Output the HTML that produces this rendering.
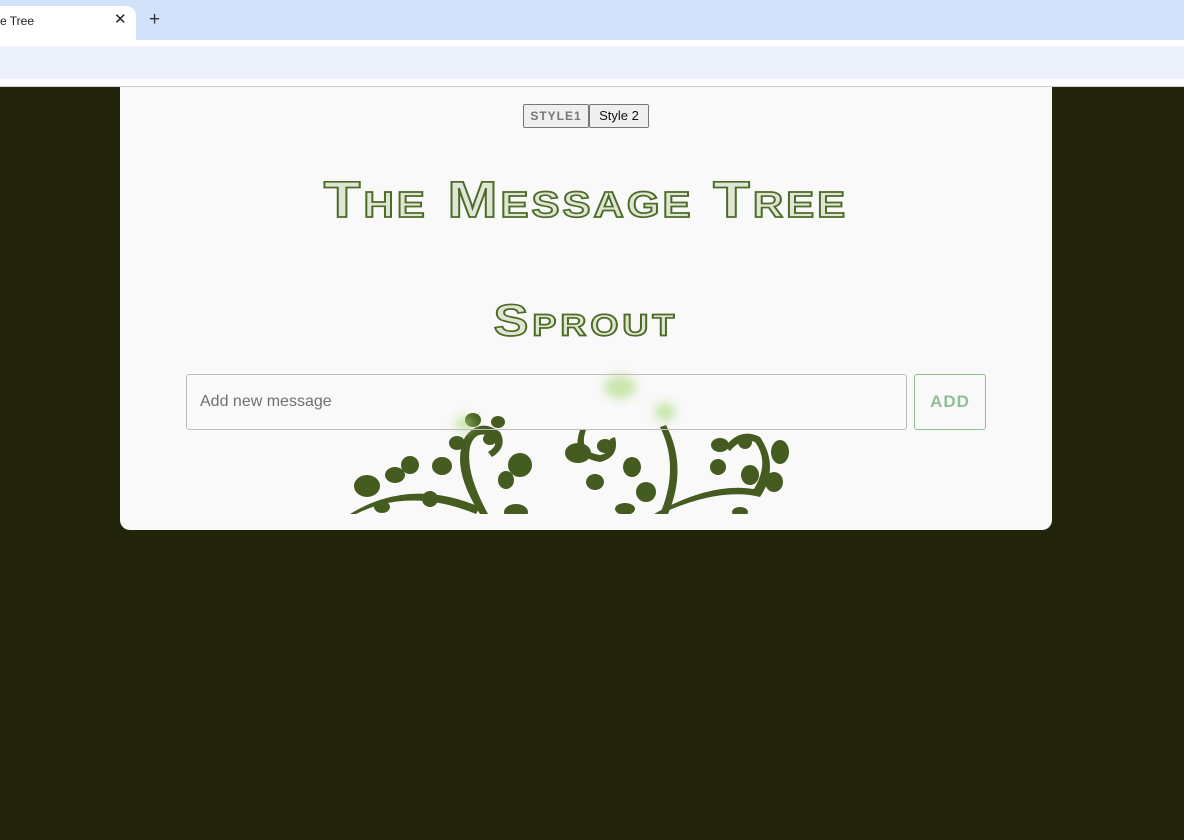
<!DOCTYPE html>
<html><head><style>
body{margin:0;width:1184px;height:840px;background:#22240c;font-family:"Liberation Sans",sans-serif;overflow:hidden;position:relative}
.tabbar{position:absolute;left:0;top:0;width:1184px;height:40px;background:#d3e2fb}
.tab{position:absolute;left:0;top:6px;width:136px;height:34px;background:#fff;border-radius:0 10px 0 0;font-size:12px;color:#222}
.tab span{position:absolute;left:0;top:8px}
.tab b{position:absolute;left:114px;top:4px;font-size:15px;font-weight:normal}
.plus{position:absolute;left:149px;top:9px;font-size:19px;color:#333}
.addr{position:absolute;left:0;top:40px;width:1184px;height:46px;background:#fff}
.addr div{position:absolute;left:0;top:6px;width:1184px;height:33px;background:#ecf1fb}
.line{position:absolute;left:0;top:86px;width:1184px;height:1px;background:#d0d0d0}
.card{position:absolute;left:120px;top:87px;width:932px;height:443px;background:#f9f9f9;border-radius:0 0 10px 10px;overflow:hidden}
.btn{position:absolute;top:17px;height:24px;border:1px solid #767676;background:#efefef;font-size:12px;box-sizing:border-box;line-height:22px;text-align:center;border-radius:2px}
.t{position:absolute;left:0;width:932px;text-align:center;font-weight:bold;font-variant:small-caps;-webkit-text-stroke:2px #4c6b25;color:#dfe6d6}
input{position:absolute;left:66px;top:287px;width:721px;height:56px;box-sizing:border-box;border:1px solid #bdbdbd;border-radius:3px;background:transparent;font-size:16px;padding-left:13px;font-family:"Liberation Sans",sans-serif;color:#333}
input::placeholder{color:#707070}
.add{position:absolute;left:794px;top:287px;width:72px;height:56px;box-sizing:border-box;border:1px solid #8fbf98;border-radius:3px;color:#8fbf98;font-weight:bold;font-size:17px;text-align:center;line-height:54px;letter-spacing:1px}
</style></head><body>
<div class="tabbar"><div class="tab"><span>e Tree</span><b>✕</b></div><div class="plus">+</div></div>
<div class="addr"><div></div></div>
<div class="line"></div>
<div class="card">
<div class="btn" style="left:403px;width:66px;color:#777;font-weight:bold;letter-spacing:1px">STYLE1</div>
<div class="btn" style="left:469px;width:60px;color:#111;font-size:13px">Style 2</div>
<div class="t" style="top:80px;font-size:60px;letter-spacing:3px;line-height:66px;transform:scaleY(0.85)">The Message Tree</div>
<div class="t" style="top:206px;font-size:52px;letter-spacing:4px;line-height:56px;transform:scaleY(0.85)">Sprout</div>
<svg style="position:absolute;left:0;top:0" width="932" height="427">
<g fill="#445c20" stroke="none">
<path d="M230 427 Q290 390 360 420 L356 427 Q290 400 236 427Z"/>
<path d="M360 427 Q330 380 345 350 Q360 330 380 345 Q388 360 372 370 L368 365 Q380 358 372 350 Q355 342 350 360 Q345 385 368 427Z"/>
<path d="M540 427 Q560 380 540 340 L546 338 Q568 380 548 427Z"/>
<path d="M540 427 Q600 400 640 410 Q660 380 640 350 Q620 340 605 360 L610 364 Q622 350 635 355 Q650 375 634 402 Q590 395 534 427Z"/>
<path d="M460 343 Q450 370 480 375 Q500 370 495 350 L490 352 Q492 366 480 368 Q458 365 466 343Z"/>
<ellipse cx="247" cy="399" rx="13" ry="11"/><ellipse cx="275" cy="388" rx="10" ry="8"/><ellipse cx="290" cy="378" rx="9" ry="9"/><ellipse cx="322" cy="379" rx="10" ry="9"/><ellipse cx="337" cy="356" rx="8" ry="7"/><ellipse cx="353" cy="333" rx="8" ry="7"/><ellipse cx="378" cy="335" rx="7" ry="6"/><ellipse cx="370" cy="352" rx="7" ry="6"/><ellipse cx="400" cy="378" rx="12" ry="12"/><ellipse cx="386" cy="393" rx="8" ry="9"/><ellipse cx="310" cy="412" rx="8" ry="8"/><ellipse cx="262" cy="420" rx="8" ry="6"/><ellipse cx="396" cy="425" rx="12" ry="8"/>
<ellipse cx="458" cy="366" rx="13" ry="10"/><ellipse cx="485" cy="359" rx="8" ry="7"/><ellipse cx="475" cy="395" rx="9" ry="8"/><ellipse cx="512" cy="380" rx="9" ry="10"/><ellipse cx="526" cy="405" rx="10" ry="10"/><ellipse cx="600" cy="358" rx="9" ry="7"/><ellipse cx="598" cy="380" rx="8" ry="8"/><ellipse cx="625" cy="355" rx="7" ry="7"/><ellipse cx="630" cy="388" rx="9" ry="10"/><ellipse cx="660" cy="365" rx="9" ry="12"/><ellipse cx="654" cy="395" rx="9" ry="10"/><ellipse cx="505" cy="422" rx="10" ry="6"/><ellipse cx="620" cy="425" rx="8" ry="5"/>
</g>
<rect x="0" y="427" width="932" height="20" fill="#f9f9f9"/>
<g fill="#a8d878" opacity="0.6" style="filter:blur(5px)"><ellipse cx="500" cy="300" rx="16" ry="12"/><ellipse cx="545" cy="325" rx="10" ry="10"/><ellipse cx="345" cy="337" rx="10" ry="8"/></g>
</svg>
<input placeholder="Add new message">
<div class="add">ADD</div>
</div>
</body></html>
